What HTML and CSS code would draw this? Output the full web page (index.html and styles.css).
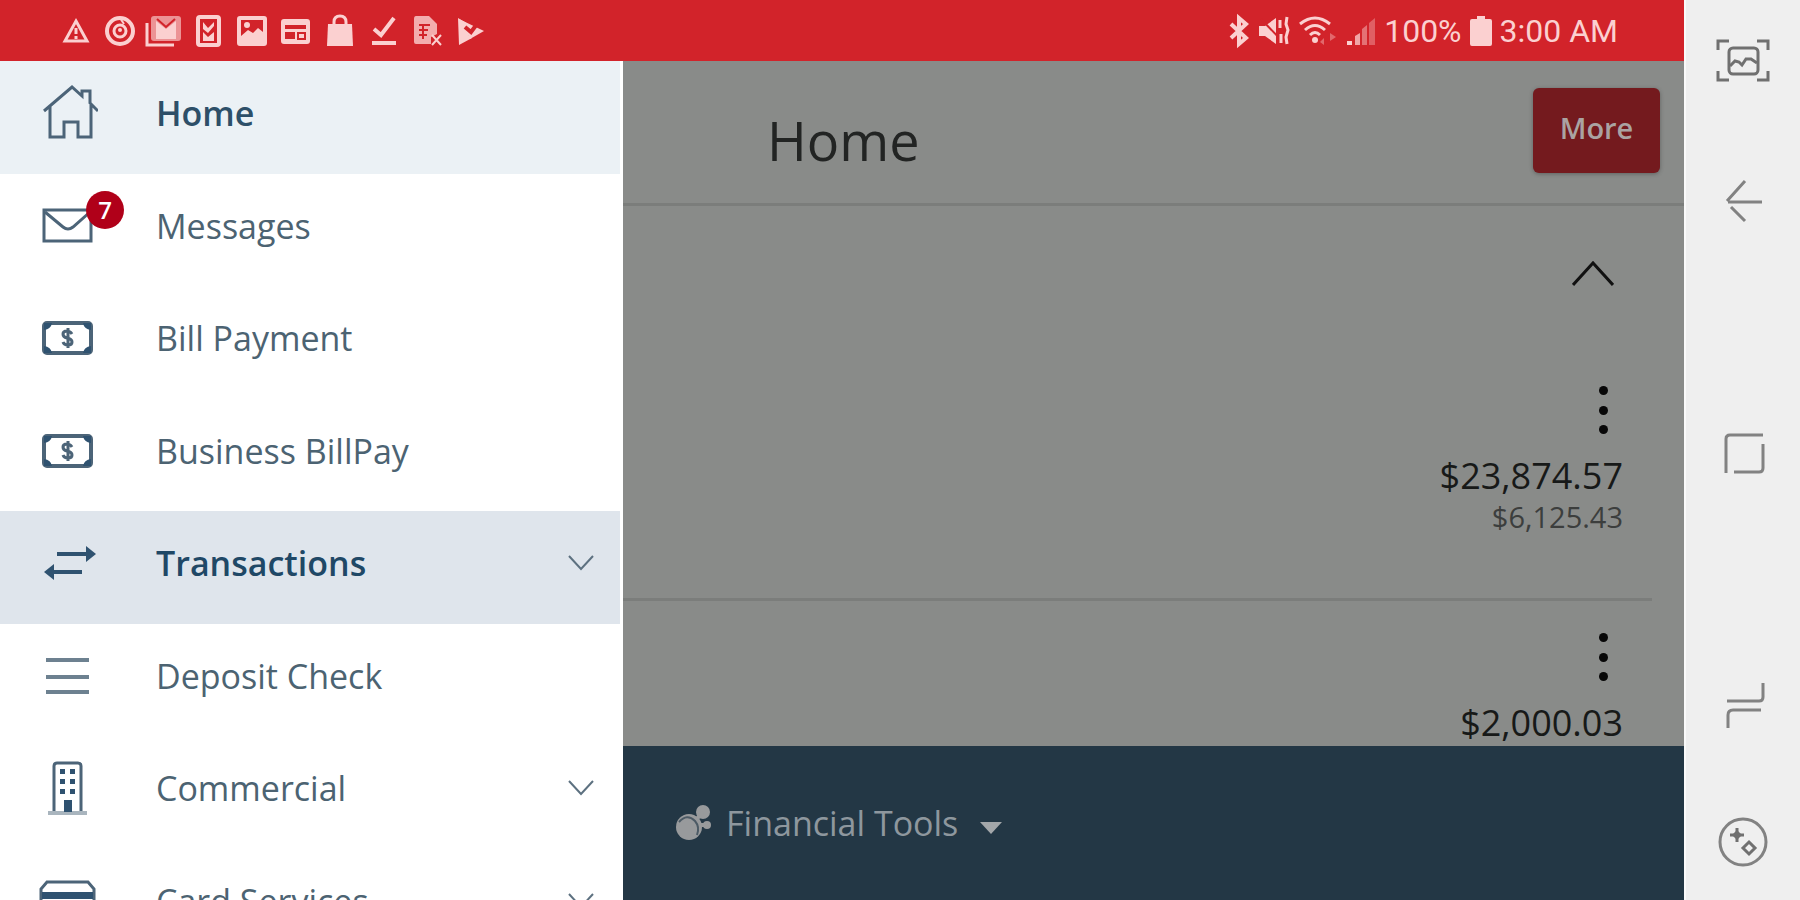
FILE: index.html
```html
<!DOCTYPE html>
<html lang="en">
<head>
  <meta charset="UTF-8" />
  <meta name="viewport" content="width=device-width, initial-scale=1.0" />
  <title>Home - Mobile Banking</title>
  <link rel="stylesheet" href="styles.css">
</head>
<body>
  <div class="app">
    <header class="status-bar">
      <div class="status-icons">
        <svg viewBox="0 0 32 32"><path d="M16 6 L27 26 H5 Z" class="line thick"/><path d="M16 13 V19 M16 21 V24" class="line thick"/></svg>
        <svg viewBox="0 0 32 32"><circle cx="16" cy="16" r="13" class="line heavy"/><circle cx="16" cy="16" r="6" class="line thick"/><circle cx="16" cy="15" r="2"/><path d="M16 3 L20 9" class="line"/></svg>
        <svg viewBox="0 0 32 32"><path d="M-1 8 V30 H26" class="line thick"/><rect x="3" y="1" width="30" height="25" rx="3" opacity=".65"/><path d="M8 24 V6 L18 14 L28 6 V24 Z"/><path d="M9 4 L18 12 L27 4" class="cut"/></svg>
        <svg viewBox="0 0 32 32"><rect x="6" y="2" width="21" height="28" rx="2" class="line heavy"/><path d="M11 7 V14 L16 18 L22 11 V7 L16 13 Z M11 17 V26 H22 V17 L16 22 Z"/></svg>
        <svg viewBox="0 0 32 32"><path fill-rule="evenodd" d="M4 1 H28 Q31 1 31 4 V28 Q31 31 28 31 H4 Q1 31 1 28 V4 Q1 1 4 1 Z M5 5 V21 L12 15 L17 18 L22 13 L27 17 V5 Z"/><circle cx="11" cy="10" r="3"/></svg>
        <svg viewBox="0 0 32 32"><path fill-rule="evenodd" d="M4 4 H27 Q30 4 30 7 V26 Q30 29 27 29 H4 Q1 29 1 26 V7 Q1 4 4 4 Z M5 10 V14 H26 V10 Z M5 17 V24 H15 V17 Z"/><path d="M18 18 H25 V24 H18 Z" class="cut"/></svg>
        <svg viewBox="0 0 32 32"><path d="M4 9 H28 L29 31 H3 Z"/><path d="M10 11 V7 Q10 1 16 1 Q22 1 22 7 V11" class="line thick"/></svg>
        <svg viewBox="0 0 32 32"><path d="M6 14 L13 20 L26 3" class="line heavy"/><path d="M4 28 H28" class="line heavy"/></svg>
        <svg viewBox="0 0 32 32"><path d="M4 1 H17 L25 9 V19 L19 22 V29 H4 Q2 29 2 27 V4 Q2 1 4 1 Z" opacity=".8"/><path d="M7 10 H18 M7 15 H16 M7 20 H15 M11 9 V24" class="cut"/><path d="M20 20 L29 30 M29 20 L20 30" class="line"/></svg>
        <svg viewBox="0 0 32 32"><path d="M2 3 L12 9 V20 L16 23 L3 30 Z"/><path d="M3 4 L28 16 L14 24 Z"/><path d="M9 12 L15 17 L24 5" class="cut wide"/></svg>
      </div>
      <div class="status-info">
        <svg class="bluetooth" viewBox="0 0 22 32"><path d="M3 9 L18 23 L11 29 V3 L18 9 L3 23" class="line heavy"/></svg>
        <svg class="mute" viewBox="0 0 32 32"><path d="M1 11 H7 L18 3 V29 L7 21 H1 Z"/><path d="M3 4 L27 29" class="cut"/><path d="M22 5 V13 M23 19 V28 M29 2 L28 9 L30 15 L28 22 L29 29" class="line thick"/></svg>
        <svg class="wifi" viewBox="0 0 40 32"><path d="M2 9 Q17 -3 32 9 M7 15 Q17 6 27 15 M12 20 Q17 15 22 20" class="line thick"/><circle cx="17" cy="25" r="3"/><path d="M22 27 L26 23 V30 Z M32 18 L38 22 L32 26 Z" opacity=".4"/></svg>
        <svg class="signal" viewBox="0 0 30 32"><path d="M1 26 H6 V30 H1 Z"/><path d="M9 21 L14 18 V30 H9 Z" opacity=".75"/><path d="M16 14 L21 10 V30 H16 Z" opacity=".45"/><path d="M23 8 L29 3 V30 H23 Z" opacity=".35"/></svg>
        <span>100%</span>
        <svg class="battery" viewBox="0 0 22 32"><path d="M7 1 H15 V4 H20 Q22 4 22 6 V29 Q22 31 20 31 H2 Q0 31 0 29 V6 Q0 4 2 4 H7 Z"/></svg>
        <time>3:00 AM</time>
      </div>
    </header>

    <div class="content">
      <nav class="sidebar">
        <ul class="menu">
          <li>
            <a href="#" class="menu-item current">
              <svg class="menu-icon" viewBox="0 0 60 60"><path d="M6 28 L34 4 L44 13 V8 H52 V20 L60 28 M12 23 V54 H26 V39 H40 V54 H53 V22"/></svg>
              <span class="label">Home</span>
            </a>
          </li>
          <li>
            <a href="#" class="menu-item">
              <svg class="menu-icon" viewBox="0 0 60 60"><rect x="6" y="14" width="47" height="31"/><path d="M7 16 L25 31 Q30 35 35 31 L52 16"/></svg>
              <span class="badge">7</span>
              <span class="label">Messages</span>
            </a>
          </li>
          <li>
            <a href="#" class="menu-item">
              <svg class="menu-icon" viewBox="0 0 60 60"><rect x="6" y="15" width="47" height="30" rx="3" class="frame"/><path class="solid" d="M6 15 H14 Q13 21 6 22 Z M53 15 H45 Q46 21 53 22 Z M6 45 H14 Q13 39 6 38 Z M53 45 H45 Q46 39 53 38 Z"/><path d="M34 26 Q32 23 29 23 Q25 23 25 26 Q25 29 29 30 Q34 31 34 34 Q34 37 30 37 Q26 37 25 34 M30 20 V40"/></svg>
              <span class="label">Bill Payment</span>
            </a>
          </li>
          <li>
            <a href="#" class="menu-item">
              <svg class="menu-icon" viewBox="0 0 60 60"><rect x="6" y="15" width="47" height="30" rx="3" class="frame"/><path class="solid" d="M6 15 H14 Q13 21 6 22 Z M53 15 H45 Q46 21 53 22 Z M6 45 H14 Q13 39 6 38 Z M53 45 H45 Q46 39 53 38 Z"/><path d="M34 26 Q32 23 29 23 Q25 23 25 26 Q25 29 29 30 Q34 31 34 34 Q34 37 30 37 Q26 37 25 34 M30 20 V40"/></svg>
              <span class="label">Business BillPay</span>
            </a>
          </li>
          <li>
            <a href="#" class="menu-item open">
              <svg class="menu-icon" viewBox="0 0 60 60"><path class="bold" d="M19 21 H48 M14 39 H44"/><path class="solid" d="M48 13 L58 21 L48 29 Z M16 31 L6 39 L16 47 Z"/></svg>
              <span class="label">Transactions</span>
              <svg class="chevron" viewBox="0 0 26 16"><path d="M1 1 L13 14 L25 1"/></svg>
            </a>
          </li>
          <li>
            <a href="#" class="menu-item">
              <svg class="menu-icon" viewBox="0 0 60 60"><path class="bar" d="M8 14 H51 M8 31 H51 M8 46 H51"/></svg>
              <span class="label">Deposit Check</span>
            </a>
          </li>
          <li>
            <a href="#" class="menu-item">
              <svg class="menu-icon" viewBox="0 0 60 60"><path d="M16 53 V8 Q16 5 19 5 H40 Q43 5 43 8 V53"/><path class="ground" d="M10 55 H49"/><path class="solid" d="M22 11 h5 v5 h-5z M32 11 h5 v5 h-5z M22 21 h5 v5 h-5z M32 21 h5 v5 h-5z M22 31 h5 v5 h-5z M32 31 h5 v5 h-5z M26 42 h8 v12 h-8z"/></svg>
              <span class="label">Commercial</span>
              <svg class="chevron" viewBox="0 0 26 16"><path d="M1 1 L13 14 L25 1"/></svg>
            </a>
          </li>
          <li>
            <a href="#" class="menu-item">
              <svg class="menu-icon" viewBox="0 0 60 60"><path d="M3 52 V18 L9 11 H50 L56 18 V52 Z"/><path class="solid" d="M4 21 H55 V28 H4 Z"/></svg>
              <span class="label">Card Services</span>
              <svg class="chevron" viewBox="0 0 26 16"><path d="M1 1 L13 14 L25 1"/></svg>
            </a>
          </li>
        </ul>
      </nav>

      <main class="main">
        <div class="page-header">
          <h1 class="title">Home</h1>
          <button type="button" class="more-button">More</button>
        </div>

        <div class="accounts">
          <button type="button" class="collapse-button" aria-label="Collapse accounts">
            <svg viewBox="0 0 42 26"><path d="M1 25 L21 3 L41 25"/></svg>
          </button>
          <section class="account">
            <button type="button" class="dots" aria-label="Account options"><i></i><i></i><i></i></button>
            <p class="balance">$23,874.57</p>
            <p class="available">$6,125.43</p>
          </section>
          <section class="account">
            <button type="button" class="dots" aria-label="Account options"><i></i><i></i><i></i></button>
            <p class="balance">$2,000.03</p>
          </section>
        </div>

        <footer class="tools-bar">
          <button type="button" class="tools-button">
            <svg class="tools-icon" viewBox="0 0 36 36"><circle cx="14" cy="22" r="13"/><circle cx="28" cy="7" r="7"/><circle cx="32" cy="20" r="4"/><path class="joint" d="M20 16 L28 7 M22 20 H32"/><path d="M4 17 Q12 8 20 16 Q25 22 22 30"/></svg>
            <span>Financial Tools</span>
            <svg class="caret" viewBox="0 0 22 12"><path d="M0 0 H22 L11 12 Z"/></svg>
          </button>
        </footer>
      </main>
    </div>
  </div>

  <aside class="rail">
    <button type="button" aria-label="Capture screen">
      <svg viewBox="0 0 56 56"><path class="strong" d="M3 18 V9 H14 M42 9 H53 V18 M3 39 V48 H14 M42 48 H53 V39"/><rect class="strong" x="14" y="16" width="29" height="26" rx="4"/><path class="strong" d="M15 34 L20 29 L24 30 L27 33 L31 27 L36 27 L42 31"/></svg>
    </button>
    <div class="rail-nav">
      <button type="button" aria-label="Back">
        <svg viewBox="0 0 56 56"><path d="M47 29 H13 M30 8 L12 28 M16 34 L30 48"/></svg>
      </button>
      <button type="button" aria-label="Home screen">
        <svg viewBox="0 0 56 56"><path d="M48 9 H15 Q11 9 11 13 V47 M19 46 H44 Q48 46 48 42 V18"/></svg>
      </button>
      <button type="button" aria-label="Recent apps">
        <svg viewBox="0 0 56 56"><path d="M12 23 H44 Q48 23 48 19 V5 M46 32 H18 Q13 32 13 37 V50"/></svg>
      </button>
    </div>
    <button type="button" aria-label="Game tools">
      <svg viewBox="0 0 56 56"><circle cx="28" cy="28" r="23"/><path class="strong" d="M15 21 H29 M22 14 V28"/><path class="fill" d="M17 21 L22 16 L27 21 L22 26 Z"/><path class="strong" d="M34 28 L40 34 L34 40 L28 34 Z"/></svg>
    </button>
  </aside>
</body>
</html>
```
FILE: styles.css
```css
* {
  box-sizing: border-box;
}
body {
  display: flex;
  height: 100vh;
  margin: 0;
  overflow: hidden;
  font-family: "Open Sans", "Noto Sans", sans-serif;
  background-color: #efefef;
}
button {
  padding: 0;
  border: none;
  background: none;
  font-family: inherit;
  cursor: pointer;
}
p, h1, ul {
  margin: 0;
  padding: 0;
}
.app {
  display: flex;
  flex: 1;
  flex-direction: column;
  min-width: 0;
}

/* Status bar */
.status-bar {
  display: flex;
  flex-shrink: 0;
  align-items: center;
  justify-content: space-between;
  height: 61px;
  padding: 0 66px 0 60px;
  background-color: #d2232a;
  color: #fbd0d0;
  font-family: Roboto, sans-serif;
  font-size: 32px;
}
.status-bar svg {
  height: 32px;
  fill: #fbd0d0;
  overflow: visible;
}
.status-bar .line {
  fill: none;
  stroke: #fbd0d0;
  stroke-width: 2;
}
.status-bar .thick {
  stroke-width: 3;
}
.status-bar .heavy {
  stroke-width: 4;
}
.status-bar .cut {
  fill: none;
  stroke: #d2232a;
  stroke-width: 2;
}
.status-bar .wide {
  stroke-width: 4;
}
.status-icons {
  display: flex;
  gap: 12px;
}
.status-icons svg {
  width: 32px;
}
.status-info {
  display: flex;
  align-items: center;
  gap: 8px;
}
.bluetooth, .battery {
  width: 22px;
}
.mute {
  width: 32px;
}
.wifi {
  width: 40px;
}
.signal {
  width: 30px;
}

/* Side menu */
.content {
  display: flex;
  flex: 1;
  min-height: 0;
}
.sidebar {
  flex-shrink: 0;
  width: 623px;
  overflow: hidden;
  padding-right: 3px;
  background-color: #fff;
}
.menu {
  list-style: none;
}
.menu-item {
  position: relative;
  display: flex;
  align-items: center;
  height: 12.5vh;
  padding: 0 26px 8px 38px;
  color: #4c6372;
  font-size: 34px;
  text-decoration: none;
}
.menu-item.current {
  background-color: #ebf1f5;
  color: #2d4f68;
  font-weight: 600;
}
.menu-item.open {
  background-color: #dfe5ec;
  color: #1f4866;
  font-weight: 600;
}
.menu-icon {
  width: 60px;
  height: 60px;
  margin-right: 58px;
  fill: none;
  stroke: #4c6478;
  stroke-width: 3;
}
.menu-icon .frame {
  stroke-width: 4;
}
.menu-icon .bold {
  stroke: #2f5270;
  stroke-width: 4;
}
.menu-icon .bar {
  stroke: #6d8190;
  stroke-width: 4;
}
.menu-icon .ground {
  stroke: #a9b5be;
  stroke-width: 4;
}
.menu-icon .solid {
  fill: #2f5270;
  stroke: none;
}
.label {
  flex: 1;
}
.badge {
  position: absolute;
  top: 17px;
  left: 86px;
  width: 38px;
  height: 38px;
  border-radius: 50%;
  background-color: #b00019;
  color: #fff;
  font-size: 24px;
  font-weight: 600;
  line-height: 38px;
  text-align: center;
}
.chevron {
  width: 26px;
  height: 16px;
  fill: none;
  stroke: #5d7180;
  stroke-width: 2;
}

/* Main panel, dimmed while the menu is open */
.main {
  display: flex;
  flex: 1;
  flex-direction: column;
  min-width: 0;
  background-color: #898b89;
}
.page-header {
  display: flex;
  flex-shrink: 0;
  align-items: flex-start;
  justify-content: space-between;
  height: 145px;
  padding: 27px 24px 0 144px;
  border-bottom: 3px solid #7b7d7b;
}
.title {
  margin-top: 20px;
  color: #222423;
  font-size: 54px;
  font-weight: 400;
  line-height: 64px;
}
.more-button {
  width: 127px;
  height: 85px;
  padding-bottom: 6px;
  border-radius: 6px;
  background-color: #741a1e;
  box-shadow: 0 1px 4px rgba(0, 0, 0, 0.3);
  color: #aaa3a2;
  font-size: 29px;
  font-weight: 600;
}
.accounts {
  flex: 1;
  min-height: 0;
  overflow: hidden;
}
.collapse-button {
  display: block;
  margin: 54px 70px 68px auto;
}
.collapse-button svg {
  display: block;
  width: 42px;
  height: 26px;
  fill: none;
  stroke: #111;
  stroke-width: 3;
}
.account {
  display: flex;
  flex-direction: column;
  align-items: flex-end;
  margin-right: 32px;
  padding: 32px 29px 64px 0;
  border-bottom: 3px solid #7b7d7b;
}
.dots {
  display: flex;
  flex-direction: column;
  align-items: center;
  justify-content: space-between;
  width: 12px;
  height: 48px;
  margin: 0 14px 18px 0;
}
.dots i {
  width: 9px;
  height: 9px;
  border-radius: 50%;
  background-color: #080808;
}
.balance {
  color: #171918;
  font-size: 36px;
  font-weight: 500;
  line-height: 48px;
}
.available {
  color: #3c3e3d;
  font-size: 29px;
  line-height: 34px;
}
.tools-bar {
  display: flex;
  flex-shrink: 0;
  align-items: center;
  height: 154px;
  padding-left: 52px;
  background-color: #233745;
}
.tools-button {
  display: flex;
  align-items: center;
  color: #8e979e;
  font-size: 34px;
}
.tools-icon {
  width: 36px;
  height: 36px;
  margin-right: 15px;
  fill: #989a9c;
}
.tools-icon path {
  fill: none;
  stroke: #4c5a65;
  stroke-width: 2;
}
.tools-icon .joint {
  stroke: #989a9c;
  stroke-width: 4;
}
.caret {
  width: 22px;
  height: 12px;
  margin: 10px 0 0 22px;
  fill: #a3a7aa;
}

/* Device buttons */
.rail {
  display: flex;
  flex-shrink: 0;
  flex-direction: column;
  align-items: center;
  width: 116px;
  padding: 32px 0 30px;
  border-left: 2px solid #fafafa;
  background-color: #efefef;
}
.rail-nav {
  display: flex;
  flex: 1;
  flex-direction: column;
  justify-content: space-between;
  margin: 85px 0 80px;
}
.rail svg {
  display: block;
  width: 56px;
  height: 56px;
  fill: none;
  stroke: #828282;
  stroke-width: 3;
}
.rail .strong {
  stroke: #707070;
}
.rail .fill {
  fill: #707070;
  stroke: none;
}
```
